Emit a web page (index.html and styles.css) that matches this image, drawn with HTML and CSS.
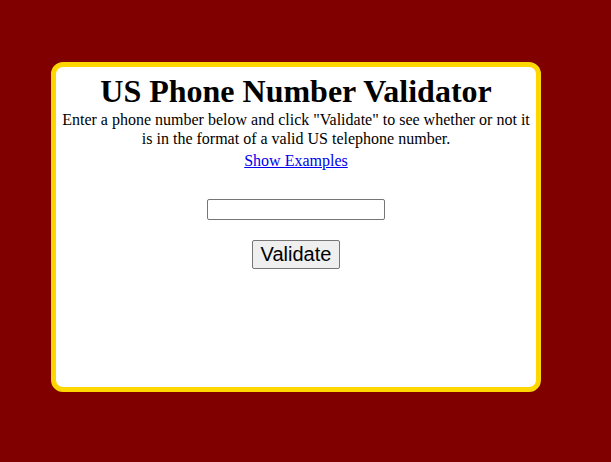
FILE: index.html
```html
<!DOCTYPE html>
<html>
<head>
<meta charset="utf-8">
<link rel="stylesheet" href="styles.css">
</head>
<body>
<div class="card">
  <h1 class="title">US Phone Number Validator</h1>
  <p class="intro">Enter a phone number below and click "Validate" to see whether or not it is in the format of a valid US telephone number.</p>
  <a class="examples" href="#">Show Examples</a>
  <input class="phone" type="text">
  <button class="validate">Validate</button>
</div>
</body>
</html>
```
FILE: styles.css
```css
html, body {
  margin: 0;
  padding: 0;
  background: #800000;
  height: 100%;
}
body {
  padding: 62px 0 0 51px;
  box-sizing: border-box;
  font-family: "Liberation Serif", "Times New Roman", serif;
}
.card {
  box-sizing: border-box;
  width: 490px;
  height: 330px;
  background: #fff;
  border: 5px solid #ffd700;
  border-radius: 12px;
  display: flex;
  flex-direction: column;
  align-items: center;
  text-align: center;
  padding: 0 4px;
}
.title {
  font-size: 32px;
  font-weight: bold;
  margin: 6px 0 0 0;
  line-height: 37px;
  color: #000;
}
.intro {
  font-size: 16px;
  margin: 0;
  line-height: 19px;
  color: #000;
}
.examples {
  font-size: 16px;
  margin-top: 3px;
  color: #0000ee;
  line-height: 19px;
}
.phone {
  margin-top: 29px;
  width: 178px;
  height: 21px;
  box-sizing: border-box;
  border: 1px solid #767676;
  border-radius: 2px;
  padding: 1px 2px;
  font-size: 13px;
}
.validate {
  margin-top: 20px;
  font-family: "Liberation Sans", Arial, sans-serif;
  font-size: 20px;
  padding: 1px 8px;
  height: 29px;
  border: 1px solid #767676;
  border-radius: 2px;
  background: #efefef;
  color: #000;
}
```
